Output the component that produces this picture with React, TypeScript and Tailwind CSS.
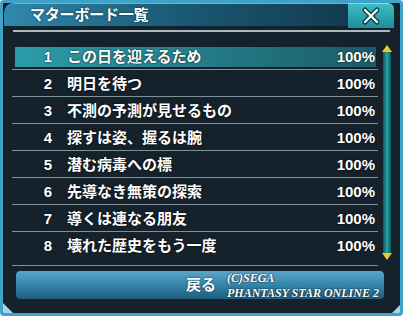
const rows = [
  { no: 1, title: "この日を迎えるため", pct: "100%" },
  { no: 2, title: "明日を待つ", pct: "100%" },
  { no: 3, title: "不測の予測が見せるもの", pct: "100%" },
  { no: 4, title: "探すは姿、握るは腕", pct: "100%" },
  { no: 5, title: "潜む病毒への標", pct: "100%" },
  { no: 6, title: "先導なき無策の探索", pct: "100%" },
  { no: 7, title: "導くは連なる朋友", pct: "100%" },
  { no: 8, title: "壊れた歴史をもう一度", pct: "100%" },
];

const font = { fontFamily: '"Liberation Sans", "Noto Sans CJK JP", sans-serif' };

function CloseIcon() {
  return (
    <svg width="20" height="20" viewBox="0 0 20 20">
      <path d="M4 4 L16 16 M16 4 L4 16" stroke="#0b3a40" strokeWidth="5" strokeLinecap="round" />
      <path d="M4 4 L16 16 M16 4 L4 16" stroke="#ffffff" strokeWidth="2.4" strokeLinecap="round" />
    </svg>
  );
}

export default function App() {
  return (
    <div
      className="w-[403px] h-[316px] bg-[#15222b] border-[3px] border-[#3fa3c8] rounded-[4px] flex flex-col relative overflow-hidden text-white"
      style={font}
    >
      {/* Title bar */}
      <div className="flex h-[25px] ml-[1px] mr-[6px]">
        <div className="flex-1 flex items-center pl-[26px] rounded-tl-[10px] bg-gradient-to-r from-[#2f89ab] via-[#1b5a75] to-[#123b4f] border-t border-[#5fb8d6] border-b-2 border-b-[#0e2530]">
          <span className="text-[15px] font-bold tracking-[-0.2px] [text-shadow:0_0_2px_#05222e]">マターボード一覧</span>
        </div>
        <div className="w-[46px] flex items-center justify-center bg-gradient-to-b from-[#3cbcc4] to-[#1f8e98] border-t border-[#7ddde2] rounded-tr-[6px]">
          <CloseIcon />
        </div>
      </div>

      {/* divider under title */}
      <div className="mt-[2px] mx-[10px] h-[2px] bg-[#aab9bf]" />

      {/* list + scrollbar */}
      <div className="flex mt-[11px]">
        <div className="ml-[9px] w-[366px] h-[223px] border-b border-[#7f9097]">
          {rows.map((r, i) => (
            <div
              key={r.no}
              className={`h-[27px] pt-[4px] pb-[3px] ${i < rows.length - 1 ? "border-b border-[#7f9097]" : ""}`}
            >
              <div
                className={`h-[20px] ml-[3px] mr-[2px] flex items-center text-[15px] font-bold [text-shadow:0_0_2px_#000] ${
                  i === 0 ? "bg-gradient-to-r from-[#2b9ca8] via-[#247e8a] to-[#1b5b67]" : ""
                }`}
              >
                <span className="w-[20px] ml-[23px] text-center">{r.no}</span>
                <span className="ml-[9px] flex-1">{r.title}</span>
                <span className="mr-[1px]">{r.pct}</span>
              </div>
            </div>
          ))}
        </div>

        {/* scrollbar */}
        <div className="ml-[4px] w-[10px] h-[217px] flex flex-col items-center">
          <div className="w-0 h-0 mt-[2px] border-l-[5px] border-r-[5px] border-b-[7px] border-l-transparent border-r-transparent border-b-[#f0c828]" />
          <div className="flex-1 w-[8px] bg-gradient-to-r from-[#0f5558] via-[#2aa6a8] to-[#0f5558]" />
          <div className="w-0 h-0 border-l-[5px] border-r-[5px] border-t-[7px] border-l-transparent border-r-transparent border-t-[#f0c828]" />
        </div>
      </div>

      {/* back button */}
      <div className="relative mt-[4px] ml-[12px] w-[370px] h-[30px] rounded-[5px] border border-[#0c2836] bg-gradient-to-b from-[#5aa6c8] via-[#3585a9] to-[#1f5d7d] flex items-center justify-center">
        <span className="text-[15px] font-bold ml-[2px] [text-shadow:0_0_2px_#0a2a3a]">戻る</span>
        <div
          className="absolute left-[211px] top-[0px] text-[12px] leading-[15px] font-bold italic [text-shadow:0_0_2px_#000]"
          style={{ fontFamily: '"Liberation Serif", serif' }}
        >
          <div>(C)SEGA</div>
          <div>PHANTASY STAR ONLINE 2</div>
        </div>
      </div>

      <div className="flex-1" />

      {/* corner decoration */}
      <div className="absolute left-0 bottom-0 w-0 h-0 border-l-[10px] border-t-[10px] border-l-[#9fd8e8] border-t-transparent" />
      <div className="absolute right-0 bottom-0 w-0 h-0 border-r-[8px] border-t-[8px] border-r-[#9fd8e8] border-t-transparent" />
    </div>
  );
}
